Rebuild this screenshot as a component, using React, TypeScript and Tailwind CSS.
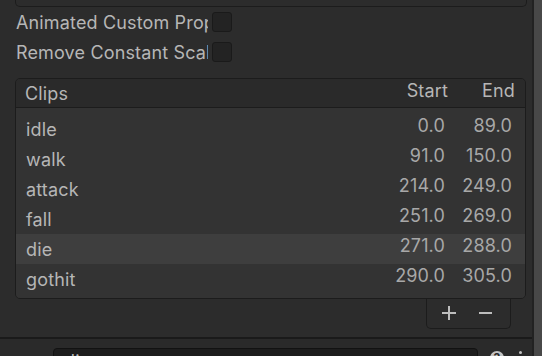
import React from 'react'

const clips = [
  { name: 'idle', start: '0.0', end: '89.0' },
  { name: 'walk', start: '91.0', end: '150.0' },
  { name: 'attack', start: '214.0', end: '249.0' },
  { name: 'fall', start: '251.0', end: '269.0' },
  { name: 'die', start: '271.0', end: '288.0', selected: true },
  { name: 'gothit', start: '290.0', end: '305.0' },
]

const Toggle = ({ label }: { label: string }) => (
  <div className="flex items-center h-[30px] shrink-0">
    <div className="w-[208px] pl-[16px] overflow-hidden whitespace-nowrap">{label}</div>
    <div className="ml-[4px] w-[20px] h-[20px] rounded-[3px] bg-[#232323] border border-[#1a1a1a]" />
  </div>
)

const App = () => {
  return (
    <div
      className="w-[542px] h-[356px] flex overflow-hidden bg-[#2c2c2c] text-[18px] tracking-[0.15px] text-[#b6b6b6]"
      style={{ fontFamily: 'Inter, "Noto Sans", sans-serif' }}
    >
      <div className="w-[532px] flex flex-col">
        <div className="h-[7px] shrink-0 ml-[15px] mr-[5px] border-x border-b border-[#1c1c1c] rounded-b-[5px]" />

        <Toggle label="Animated Custom Properties" />
        <Toggle label="Remove Constant Scale Curves" />

        <div className="shrink-0 mt-[11px] ml-[15px] mr-[6px] border border-[#1c1c1c] rounded-[5px] overflow-hidden">
          <div className="flex items-center h-[29px] bg-[#2a2a2a] border-b border-[#1c1c1c] leading-none">
            <span className="flex-1 pl-[9px] pt-[2px]">Clips</span>
            <span className="pb-[4px]">Start</span>
            <span className="w-[77px] pr-[10px] pb-[4px] text-right">End</span>
          </div>
          <div className="bg-[#333333] pt-[6px] pb-[4px]">
            {clips.map(c => (
              <div
                key={c.name}
                className={`flex items-center h-[30px] leading-none ${c.selected ? 'bg-[#3e3e3e]' : ''}`}
              >
                <span className="flex-1 pl-[10px] pt-[2px]">{c.name}</span>
                <span className="pb-[7px] text-[#a8a8a8]">{c.start}</span>
                <span className="w-[80px] pr-[13px] pb-[7px] text-right text-[#a8a8a8]">{c.end}</span>
              </div>
            ))}
          </div>
        </div>

        <div className="shrink-0 self-end mr-[21px] w-[85px] h-[30px] border-x border-b border-[#1c1c1c] rounded-b-[5px] flex items-center justify-center gap-[23px] pb-[2px] pr-[3px]">
          <svg width="14" height="14" viewBox="0 0 14 14">
            <path d="M7 0v14M0 7h14" stroke="#bdbdbd" strokeWidth="2" />
          </svg>
          <svg width="13" height="14" viewBox="0 0 13 14">
            <path d="M0 7h13" stroke="#bdbdbd" strokeWidth="2" />
          </svg>
        </div>

        <div className="shrink-0 mt-[8px] h-[2px] bg-[#1a1a1a]" />

        <div className="flex items-start pt-[9px] bg-[#2a2a2a] flex-1">
          <div className="shrink-0 ml-[53px] w-[425px] h-[30px] rounded-[4px] bg-[#1d1d1d] border border-[#121212] pl-[10px] pt-[4px] leading-none">
            die
          </div>
          <div className="shrink-0 ml-[12px] mt-[3px] w-[14px] h-[14px] rounded-full bg-[#c4c4c4] text-[#2a2a2a] text-[12px] font-bold flex items-center justify-center leading-none">
            ?
          </div>
          <div className="shrink-0 ml-[15px] mt-[3px] flex flex-col gap-[3px]">
            <span className="w-[3px] h-[3px] rounded-full bg-[#c4c4c4]" />
            <span className="w-[3px] h-[3px] rounded-full bg-[#c4c4c4]" />
            <span className="w-[3px] h-[3px] rounded-full bg-[#c4c4c4]" />
          </div>
        </div>
      </div>
      <div className="w-[2px] bg-[#222222]" />
      <div className="w-[8px] bg-[#484848]" />
    </div>
  )
}

export default App
